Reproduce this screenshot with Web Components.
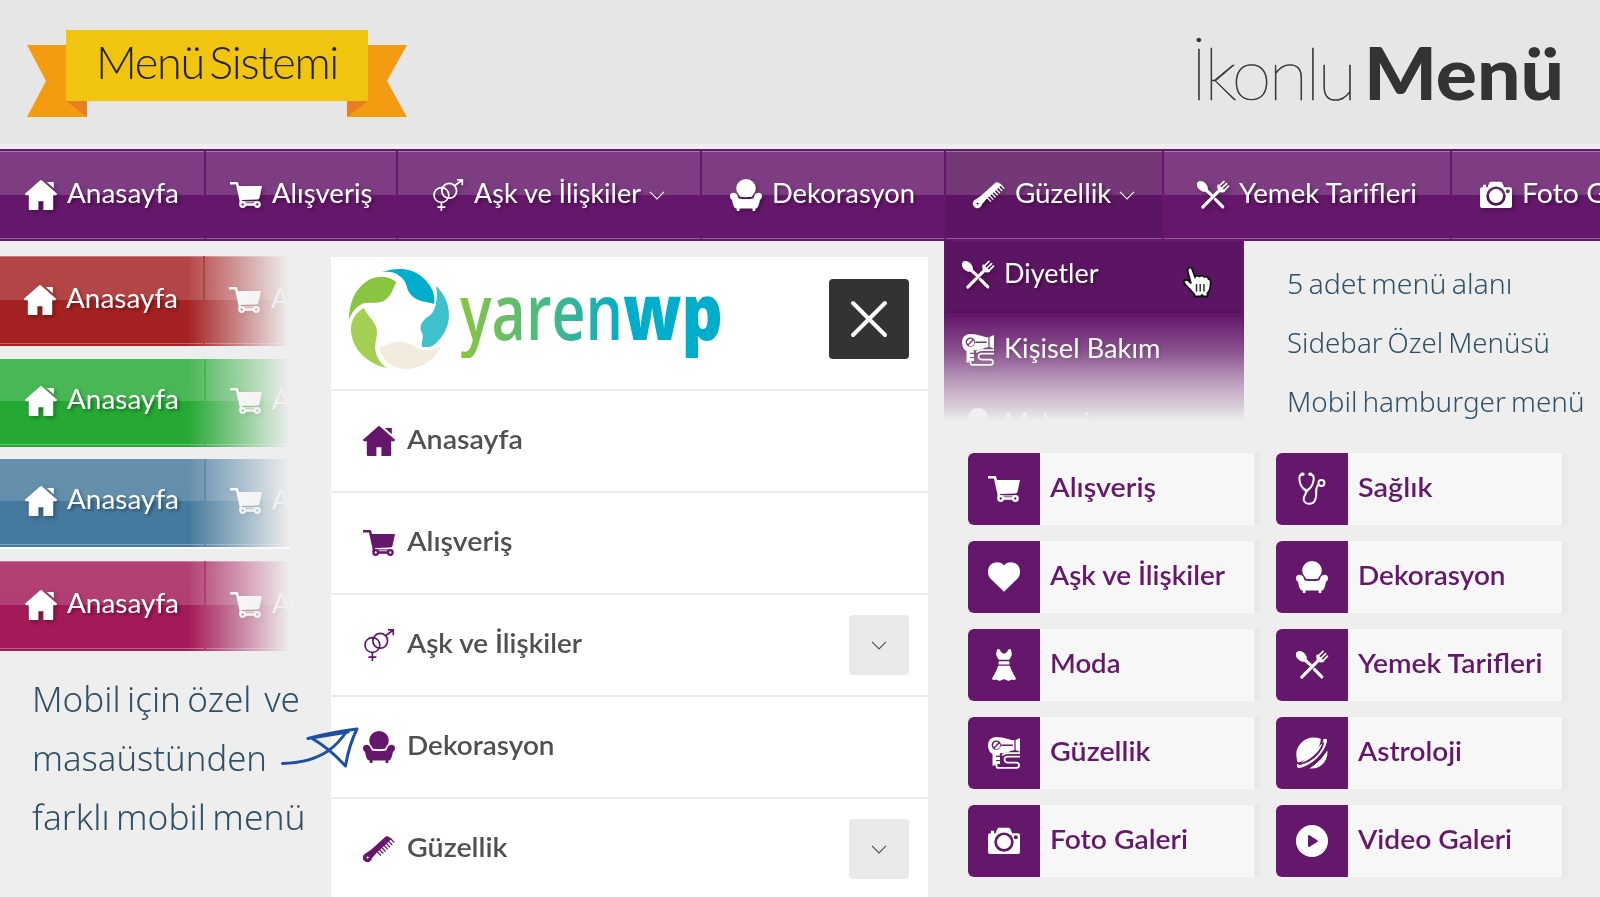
<!DOCTYPE html>
<html lang="tr">
<head>
<meta charset="utf-8">
<title>İkonlu Menü</title>
<style>
	html, body {
		margin: 0;
		padding: 0;
	}
	body {
		width: 1600px;
		height: 897px;
		overflow: hidden;
		background: #eeeeee;
		font-family: Lato, "Open Sans", sans-serif;
		--purple: #65176b;
	}
	.content {
		display: grid;
		grid-template-columns: 331px 597px 1fr;
		height: 656px;
	}
	.left {
		display: flex;
		flex-direction: column;
		padding-top: 15px;
	}
	.right {
		display: flex;
		flex-direction: column;
		padding-left: 16px;
	}
	.top {
		display: flex;
		height: 180px;
	}
	.tiles {
		display: grid;
		grid-template-columns: 292px 292px;
		gap: 16px;
		padding: 32px 0 0 24px;
	}
</style>
</head>
<body>
<page-header></page-header>
<menu-bar>
	<menu-item style="width:204px" pad="25" icon="home" w="112">Anasayfa</menu-item>
	<menu-item style="width:190px" pad="23.5" icon="cart" w="100.5">Alışveriş</menu-item>
	<menu-item style="width:302px" pad="34" icon="gender" w="167" arrow>Aşk ve İlişkiler</menu-item>
	<menu-item style="width:242px" pad="28" icon="chair" w="143">Dekorasyon</menu-item>
	<menu-item style="width:216px" pad="26.5" icon="comb" w="96.5" arrow active>Güzellik</menu-item>
	<menu-item style="width:286px" pad="32.5" icon="utensils" w="178">Yemek Tarifleri</menu-item>
	<menu-item style="width:220px" pad="28" icon="camera" w="138">Foto Galeri</menu-item>
</menu-bar>
<div class="content">
	<div class="left">
		<color-strip style="--bar:#a52122;height:90px;margin:0 0 13px -1px"></color-strip>
		<color-strip style="--bar:#25a934;height:88px;margin-bottom:12px"></color-strip>
		<color-strip style="--bar:#45799d;height:88px;margin-bottom:14px;box-shadow:0 2px 0 #fafafa"></color-strip>
		<color-strip style="--bar:#a31a58;height:90px"></color-strip>
		<side-note style="--size:35px;--line:59px;padding:17.5px 0 0 32px">
			<fit-text w="268">Mobil için özel&nbsp; ve</fit-text>
			<fit-text w="235">masaüstünden</fit-text>
			<fit-text w="273.5">farklı mobil menü</fit-text>
		</side-note>
	</div>
	<mobile-menu>
		<mobile-row icon="home" w="116">Anasayfa</mobile-row>
		<mobile-row icon="cart" w="105.5">Alışveriş</mobile-row>
		<mobile-row icon="gender" w="175" toggle>Aşk ve İlişkiler</mobile-row>
		<mobile-row icon="chair" w="147.5">Dekorasyon</mobile-row>
		<mobile-row icon="comb" w="100.5" toggle>Güzellik</mobile-row>
	</mobile-menu>
	<div class="right">
		<div class="top">
			<drop-menu></drop-menu>
			<side-note style="--size:28px;--line:59px;padding:12.5px 0 0 42.5px">
				<fit-text w="225.5">5 adet menü alanı</fit-text>
				<fit-text w="263">Sidebar Özel Menüsü</fit-text>
				<fit-text w="297.5">Mobil hamburger menü</fit-text>
			</side-note>
		</div>
		<div class="tiles">
			<menu-tile icon="cart" w="106">Alışveriş</menu-tile>
			<menu-tile icon="stethoscope" w="74.5">Sağlık</menu-tile>
			<menu-tile icon="heart" w="175">Aşk ve İlişkiler</menu-tile>
			<menu-tile icon="chair" w="147.5">Dekorasyon</menu-tile>
			<menu-tile icon="dress" w="70.5">Moda</menu-tile>
			<menu-tile icon="utensils" w="184.5">Yemek Tarifleri</menu-tile>
			<menu-tile icon="dryer" w="100.5">Güzellik</menu-tile>
			<menu-tile icon="planet" w="104">Astroloji</menu-tile>
			<menu-tile icon="camera" w="138">Foto Galeri</menu-tile>
			<menu-tile icon="play" w="154">Video Galeri</menu-tile>
		</div>
	</div>
</div>
<hand-arrow></hand-arrow>

<script>
// 32x32 glyphs, all painted with currentColor
const icons = {
	home: `<path d="M15 1.4q1-.9 2 0L31.8 14.6q.6 1.4-.8 1.6H28.2V30q0 1-1 1H18.4V22.2H13.4V31H4.8q-1 0-1-1V16.2H1q-1.4-.2-.8-1.6z"/><path d="M21.8 3H28.8V9.2z"/>`,
	cart: `<path d="M8.3 7H32L29.6 18.4Q29.2 20.3 27.4 20.5L11.6 21z"/><path d="M0 4.3H7L10.8 21.3V25" fill="none" stroke="currentColor" stroke-width="2.6" stroke-linejoin="round"/><path d="M10.5 22.9H27" stroke="currentColor" stroke-width="1"/><path d="M15 25.5H25" stroke="currentColor" stroke-width="2.6"/><circle cx="12.7" cy="25.5" r="2.3" fill="none" stroke="currentColor" stroke-width="2.3"/><circle cx="27.3" cy="25.5" r="2.3" fill="none" stroke="currentColor" stroke-width="2.3"/>`,
	gender: `<g fill="none" stroke="currentColor" stroke-width="1.7"><circle cx="9.4" cy="16" r="7.4"/><circle cx="17.2" cy="11.8" r="7.4"/><path d="M9.4 23.5V32M5.4 28.2H13.4M22.5 6.7L30 1.2M25 .9H30.3V6.2"/></g>`,
	chair: `<path d="M8.7 15.6Q6.2 13.2 6.2 9.6A9.8 9.6 0 0 1 25.8 9.6Q25.8 13.2 23.3 15.6L22 17.8Q16 18.6 10 17.8z"/><path d="M3.3 13.8c2 0 3.6 1 4.2 2.8l1.3 3q7.2 1 14.4 0l1.3-3c.6-1.8 2.2-2.8 4.2-2.8 2 0 3.3 1.5 3.3 3.4 0 2-1 3-2 3.6-.8 4-1.5 6.2-2.5 7.7-.7.9-1.3 1-2.2 1v2.5h-2.7v-2.5H9.5V32H6.8v-2.5c-1 0-1.6-.1-2.3-1-1-1.5-1.8-3.7-2.5-7.7C.9 20 0 19 0 17.2c0-1.9 1.3-3.4 3.3-3.4z"/>`,
	comb: `<path fill-rule="evenodd" d="M1.6 21L8 16.8 22.4 3.8Q24.6 2.3 26.4 4.2L28.2 6.2 13 20.4 9 25.2A4.6 4.6 0 1 1 1.6 21zM4.7 22.9l-.5 1.2-1.2.5 1.2.5.5 1.2.5-1.2 1.2-.5-1.2-.5z"/><path d="M27 5L31.3 9.6M24.7 7.4L29.2 12M22.5 9.6L27 14.2M20.3 11.8L24.8 16.4M18.1 13.9L22.6 18.5M15.9 16L20.3 20.6M13.7 18.1L18 22.6" stroke="currentColor" stroke-width="1.35"/>`,
	utensils: `<ellipse cx="5.4" cy="7.4" rx="6.3" ry="4.4" transform="rotate(43 5.4 7.4)"/><path d="M9 11L14.3 15.8M18.4 20.3L25.8 27.9" stroke="currentColor" stroke-width="3.1" stroke-linecap="round"/><path d="M5.8 28.2L22.4 11.4" stroke="currentColor" stroke-width="3.1" stroke-linecap="round"/><path d="M20.5 9.5L21.5 12.5 24.6 13.6Q27.4 13.5 28.4 12L20.9 4.9Q19.8 7 20.5 9.5z"/><path d="M21.6 7.6L27 2.4M24.2 9.8L29.6 4.6M26.8 12L31.5 7.2" stroke="currentColor" stroke-width="1.7" stroke-linecap="round"/>`,
	camera: `<path fill-rule="evenodd" d="M2 8.2H3V5.7H6V8.2H7.6L9.2 4Q9.7 2.7 11 2.7H20.6Q21.9 2.7 22.4 4L24.2 8.2H30q2 0 2 2V27q0 2-2 2H2q-2 0-2-2V10.2q0-2 2-2zM16 7.4a9.7 9.7 0 1 0 0 19.4 9.7 9.7 0 0 0 0-19.4zM27.8 10.3a2 2 0 1 0 0 4 2 2 0 0 0 0-4z"/><circle cx="16" cy="17.1" r="7"/>`,
	heart: `<path d="M16 30.8L2.4 17.4C-.8 14 -.8 7.4 2.4 4 6.4 .1 12.8 .3 16 4.4 19.2 .3 25.6 .1 29.6 4 32.8 7.4 32.8 14 29.6 17.4z"/>`,
	dress: `<path d="M9.2.3Q8 4 8.3 6.5L10.7 10.8H21.3L23.7 6.5Q24 4 22.8.3 21.5-.5 20.4.6 18.5 4.5 16 4.8 13.5 4.5 11.6.6 10.5-.5 9.2.3zM10.6 12.2H21.4V15.4H10.6zM10.2 16.8H21.8Q23.5 22 28 29.5 27.5 31.5 25 31 23.6 29.7 22.2 31.2 20.2 32.4 18.2 31 16 29.4 13.8 31 11.8 32.4 9.8 31.2 8.4 29.7 7 31 4.5 31.5 4 29.5 8.5 22 10.2 16.8z"/>`,
	dryer: `<path fill-rule="evenodd" d="M8 0Q14 0 20 2 24 3.3 26.4 3.2V13.2Q23 13.4 20 15.3 17 16.3 11.8 16.3V18.8H8V20H12V23H8V24H12V27H7.5V28.5H4.5V17Q0 14.5 0 8 .4 .7 8 0zM8.3 3.4a4.7 4.7 0 1 0 0 9.4 4.7 4.7 0 0 0 0-9.4zM13.2 7.6V9H24.8V7.6z"/><path d="M27.6 3.1L32 1V14.7L27.6 13z"/><path d="M8.3 4.8a3.3 3.3 0 0 1 2.1.7L5.8 10.2A3.3 3.3 0 0 1 8.3 4.8zM11.4 6.6A3.3 3.3 0 0 1 6.7 11.2z"/><path d="M32 19.6H19.5a3 3 0 0 0 0 6H28.4a2.6 2.6 0 0 1 0 5.3H10.5a2 2 0 0 1-2-2V27M32 16.2H20Q16 16.2 14.2 18.6" fill="none" stroke="currentColor" stroke-width="1.7"/>`,
	stethoscope: `<g fill="none" stroke="currentColor" stroke-width="2" stroke-linecap="round"><path d="M6 1.2Q3.2 1.8 3.4 6 3.8 12.5 8 16.3 10.5 18.4 12.8 16.3 17.3 12.5 17.7 6 17.9 1.8 14.8 1.2"/><path d="M10.5 18Q9.8 21 8.3 23.5 6.4 27.8 10 30 13.5 32 17.6 29.3 20.6 26 20.2 19 20 14 22.4 11.6"/><circle cx="25.4" cy="10" r="3"/></g><path d="M6 1.2h1M14.8 1.2h-1" stroke="currentColor" stroke-width="3.2" stroke-linecap="round"/><path d="M5 12.5Q7 17 10.5 20 14 17 16.2 12.5L10.5 16.5z"/>`,
	planet: `<path d="M4.9 26.3Q14 23 21 15.5 26 9.6 27.3 2.4 31.6.6 31 4.5 28.8 13.6 20.6 21.5 11.4 29.8 3 31 0 31 1.2 26.5 2 28.2 4.9 27.8 14.6 25.4 22 17.5 27.6 11 28.2 4.5"/><path d="M1 23Q-1.6 13 4.6 6.4 12.8-2.2 24.8 1.7 24.8 8.4 19.4 14.2 12.2 22 2.7 25.5 1.4 25.5 1 23z"/><path d="M31.3 13.5Q32.3 20 27.7 26 22.6 32.2 13.4 31.5 24.6 24.6 31.3 13.5z"/>`,
	play: `<path fill-rule="evenodd" d="M16 0a16 16 0 1 0 0 32 16 16 0 0 0 0-32zM12 10.8Q12.4 9.6 13.6 10.2L21.6 15.4Q22.4 16 21.6 16.7L13.6 21.8Q12.4 22.4 12 21.3z"/>`
};

const chevron = `<svg class="chevron" width="16" height="9" viewBox="0 0 16 9" fill="none" stroke="currentColor" stroke-width="1.2"><path d="M1 .8L8 7.8 15 .8"/></svg>`;

class MenuIcon extends HTMLElement {
	constructor(){
		super();
		this.attachShadow({mode: 'open'});
	}
	connectedCallback(){
		this.shadowRoot.innerHTML = `
			<style>
				:host { display: block; flex: none; width: 32px; height: 32px; }
				svg { display: block; overflow: visible; }
			</style>
			<svg width="32" height="32" viewBox="0 0 32 32" fill="currentColor">${icons[this.getAttribute('name')]}</svg>`;
	}
}

// One line of text, squeezed or stretched to the width in "w"
class FitText extends HTMLElement {
	constructor(){
		super();
		this.attachShadow({mode: 'open'}).innerHTML = `
			<style>
				:host { display: block; flex: none; white-space: nowrap; }
				span {
					display: inline-block;
					transform-origin: 0 50%;
					background-image: inherit;
					-webkit-background-clip: text;
					background-clip: text;
				}
			</style>
			<span><slot></slot></span>`;
	}
	connectedCallback(){
		const span = this.shadowRoot.querySelector('span');
		const w = +this.getAttribute('w');
		const natural = span.getBoundingClientRect().width;
		this.style.width = `${w}px`;
		span.style.transform = `scaleX(${w / natural})`;
	}
}

class PageHeader extends HTMLElement {
	constructor(){
		super();
		this.attachShadow({mode: 'open'}).innerHTML = `
			<style>
				:host {
					display: flex;
					justify-content: space-between;
					box-sizing: border-box;
					height: 144px;
					margin-bottom: 5px;
					padding: 30px 36px 0 27px;
					background: #e6e6e6;
				}
				.ribbon { display: grid; width: 380px; height: 87px; }
				.ribbon > * { grid-area: 1 / 1; }
				.ribbon fit-text {
					margin: 2px 0 0 69px;
					color: #222;
					font: 300 46px/60px Lato, sans-serif;
					letter-spacing: -.03em;
					word-spacing: -.12em;
				}
				h1 {
					display: flex;
					gap: 10px;
					margin: -6px 0 0;
					color: #333;
					font: 100 72px/96px Lato, sans-serif;
				}
				.thin { letter-spacing: -.04em; -webkit-text-stroke: .6px #333; }
				.bold { font-weight: 900; }
			</style>
			<div class="ribbon">
				<svg width="380" height="87">
					<path d="M0 15H60V87H0L19 51zM380 15H320V87H380L360 51z" fill="#f39c12"/>
					<path d="M39 71H60V87zM341 71H320V87z" fill="#e67e22"/>
					<path d="M39 0H341V71H39z" fill="#f1c40f"/>
				</svg>
				<fit-text w="242">Menü Sistemi</fit-text>
			</div>
			<h1><fit-text class="thin" w="164">İkonlu</fit-text><fit-text class="bold" w="200">Menü</fit-text></h1>`;
	}
}

class MenuBar extends HTMLElement {
	constructor(){
		super();
		this.attachShadow({mode: 'open'}).innerHTML = `
			<style>
				:host {
					display: flex;
					gap: 2px;
					box-sizing: border-box;
					flex: none;
					height: 92px;
					padding: 2px 0;
					overflow: hidden;
					background: var(--bar, var(--purple));
				}
			</style>
			<slot></slot>`;
	}
}

class MenuItem extends HTMLElement {
	constructor(){
		super();
		this.attachShadow({mode: 'open'});
	}
	connectedCallback(){
		const arrow = this.hasAttribute('arrow') ? chevron : '';
		this.shadowRoot.innerHTML = `
			<style>
				:host {
					display: flex;
					flex: none;
					align-items: center;
					box-sizing: border-box;
					height: 88px;
					padding-left: ${this.getAttribute('pad')}px;
					color: #fff;
					font-size: 27px;
					line-height: 34px;
					background: linear-gradient(rgba(255,255,255,.17), rgba(255,255,255,.16) 44px, transparent 44px);
					box-shadow: inset 0 1px rgba(255,255,255,.3), inset 0 -1px rgba(255,255,255,.3);
				}
				:host([active]) {
					background: linear-gradient(rgba(255,255,255,.15) 44px, transparent 44px), #5c1562;
				}
				menu-icon { margin-right: 10px; filter: drop-shadow(2px 2px 2px rgba(0,0,0,.3)); }
				fit-text { padding-bottom: 4px; text-shadow: 2px 2px 3px rgba(0,0,0,.35); }
				.chevron { margin-left: 8px; }
			</style>
			<menu-icon name="${this.getAttribute('icon')}"></menu-icon>
			<fit-text w="${this.getAttribute('w')}"><slot></slot></fit-text>${arrow}`;
	}
}

// Short coloured copy of the bar, fading out to the right
class ColorStrip extends HTMLElement {
	constructor(){
		super();
		this.attachShadow({mode: 'open'}).innerHTML = `
			<style>
				:host {
					display: flex;
					position: relative;
					align-items: flex-end;
					width: 290px;
					overflow: hidden;
				}
				menu-bar { width: 290px; }
				:host::after {
					content: '';
					position: absolute;
					inset: 0;
					background: linear-gradient(90deg, rgba(238,238,238,0) 188px, rgba(238,238,238,.5) 240px, #eee 290px);
				}
			</style>
			<menu-bar>
				<menu-item style="width:204px" pad="25" icon="home" w="112">Anasayfa</menu-item>
				<menu-item style="width:190px" pad="23.5" icon="cart" w="100.5">Alışveriş</menu-item>
			</menu-bar>`;
	}
}

class SideNote extends HTMLElement {
	constructor(){
		super();
		this.attachShadow({mode: 'open'}).innerHTML = `
			<style>
				:host {
					display: block;
					color: #2f5165;
					font-family: "Noto Sans", "Open Sans", sans-serif;
					font-weight: 350;
					font-size: var(--size);
					line-height: var(--line);
					word-spacing: -.08em;
				}
			</style>
			<slot></slot>`;
	}
}

class MobileMenu extends HTMLElement {
	constructor(){
		super();
		this.attachShadow({mode: 'open'}).innerHTML = `
			<style>
				:host {
					display: block;
					margin-top: 16px;
					overflow: hidden;
					background: #fff;
				}
				header {
					display: flex;
					align-items: flex-start;
					box-sizing: border-box;
					height: 132px;
					padding: 12px 19px 0 18px;
				}
				.brand {
					display: flex;
					margin: -7px auto 0 11px;
					color: transparent;
					font: 600 78px/96px "Open Sans", sans-serif;
				}
				.brand fit-text { -webkit-background-clip: text; background-clip: text; }
				.yaren { background-image: linear-gradient(90deg, #88c540, #4dba80 50%, #1cb0b4 85%, #00adca); }
				.wp { font-weight: 800; background-image: linear-gradient(#00adca, #00adca); }
				button {
					display: grid;
					place-items: center;
					width: 80px;
					height: 80px;
					margin: 10px 0 0;
					padding: 0;
					border: 0;
					border-radius: 4px;
					background: #333;
				}
			</style>
			<header>
				<svg width="100" height="100">
					<path fill="#00adca" d="M33 3C48-2 63-1 73 8 82 15 87 26 85 35 78 32 67 34 60 23 57 18 58 13 52 8 47 3 41 2 33 3z"/>
					<path fill="#88c540" d="M0 51C0 35 5 24 13 16 23 6 37 5 47.5 13 44 19 43 26 36 31 29 36 20 32 13 35 7 38 2 44 0 51z"/>
					<path fill="#3dc1ca" d="M87 17C95 24 100 35 100 46 100 58 94 68 86 75 82 79 77 78 73 78 72 70 76 68 72 62 70 56 74 51 80 47 88 42 89 26 87 17z"/>
					<path fill="#a4cf53" d="M15 39C19 49 29 53 28 65 27 73 24 80 29 89 31 93 34 97 38 99 22 96 2 82 2 60 2 51 7 43 15 39z"/>
					<path fill="#f4ebdf" d="M30 79C38 77 42 72 53 73 63 73 67 82 79 81 84 81 88 79 92 77 86 91 72 100 56 100 42 99 34 91 30 79z"/>
				</svg>
				<div class="brand"><fit-text class="yaren" w="163">yaren</fit-text><fit-text class="wp" w="100">wp</fit-text></div>
				<button><svg width="40" height="40" stroke="#fff" stroke-width="4" stroke-linecap="round"><path d="M4 4L36 36M36 4L4 36"/></svg></button>
			</header>
			<slot></slot>`;
	}
}

class MobileRow extends HTMLElement {
	constructor(){
		super();
		this.attachShadow({mode: 'open'});
	}
	connectedCallback(){
		const toggle = this.hasAttribute('toggle') ? `<span class="toggle">${chevron}</span>` : '';
		this.shadowRoot.innerHTML = `
			<style>
				:host {
					display: flex;
					align-items: center;
					height: 100px;
					padding: 0 19px 0 32px;
					border-top: 2px solid #ebebeb;
					color: #505050;
					font-weight: 600;
					font-size: 27px;
					line-height: 34px;
				}
				menu-icon { margin: -1px 12px 0 0; color: var(--purple); }
				fit-text { padding-bottom: 4px; }
				.toggle {
					display: grid;
					place-items: center;
					width: 60px;
					height: 60px;
					margin-left: auto;
					border-radius: 4px;
					background: #eaeaea;
				}
			</style>
			<menu-icon name="${this.getAttribute('icon')}"></menu-icon>
			<fit-text w="${this.getAttribute('w')}"><slot></slot></fit-text>${toggle}`;
	}
}

class DropMenu extends HTMLElement {
	constructor(){
		super();
		this.attachShadow({mode: 'open'}).innerHTML = `
			<style>
				:host {
					display: block;
					position: relative;
					width: 300px;
					height: 180px;
					overflow: hidden;
					background: var(--purple);
					color: #fff;
					font-size: 27px;
					line-height: 34px;
				}
				.row {
					display: flex;
					align-items: center;
					box-sizing: border-box;
					height: 73px;
					padding: 0 0 0 18px;
				}
				.row.hover {
					height: 72px;
					margin: 0 2px;
					padding: 0 0 2px 16px;
					border-bottom: 2px solid #551259;
					background: #5c1562;
				}
				.row.last { height: 76px; }
				menu-icon { margin-right: 10px; filter: drop-shadow(2px 2px 2px rgba(0,0,0,.3)); }
				fit-text { padding-bottom: 4px; text-shadow: 2px 2px 3px rgba(0,0,0,.35); }
				.fade {
					position: absolute;
					inset: 74px 0 0;
					background: linear-gradient(rgba(238,238,238,0), rgba(238,238,238,.27) 36px, rgba(238,238,238,.62) 66px, rgba(238,238,238,.85) 92px, #eee);
				}
				.hand { position: absolute; left: 238px; top: 25px; }
			</style>
			<div class="row hover"><menu-icon name="utensils"></menu-icon><fit-text w="94.5">Diyetler</fit-text></div>
			<div class="row"><menu-icon name="dryer"></menu-icon><fit-text w="156.5">Kişisel Bakım</fit-text></div>
			<div class="row last"><menu-icon name="chair"></menu-icon><fit-text w="86">Makyaj</fit-text></div>
			<div class="fade"></div>
			<svg class="hand" width="31" height="33" viewBox="0 0 31 33">
				<path d="M6.5 2Q9.5.5 10.5 4L13 11Q14.5 8.5 17.5 10.5 20 8.5 22.2 11 25.5 9.5 26.5 13 29.5 13.5 28.5 19 28 25 25.5 27V30.5H21.5L20 29 18.5 30.5H12.5V28.5L8 23.5 2.5 17.5Q1 14.5 3.5 14 6 13.5 9 17.5L6 7Q5 3.5 6.5 2z" fill="#fff" stroke="#111" stroke-width="1.8"/>
				<path d="M14.5 18V25.5M18.2 18V25.5M22 18V25.5" stroke="#222" stroke-width="1.4"/>
			</svg>`;
	}
}

class MenuTile extends HTMLElement {
	constructor(){
		super();
		this.attachShadow({mode: 'open'});
	}
	connectedCallback(){
		this.shadowRoot.innerHTML = `
			<style>
				:host {
					display: flex;
					align-items: center;
					box-sizing: border-box;
					height: 72px;
					border-right: 6px solid #e9e9e9;
					border-radius: 6px 0 0 6px;
					background: #f7f7f7;
					color: var(--purple);
					font-weight: 600;
					font-size: 27px;
					line-height: 34px;
				}
				.box {
					display: grid;
					place-items: center;
					width: 72px;
					height: 72px;
					margin-right: 10px;
					border-radius: 6px 0 0 6px;
					background: var(--purple);
					color: #fff;
				}
				fit-text { padding-bottom: 4.5px; }
			</style>
			<div class="box"><menu-icon name="${this.getAttribute('icon')}"></menu-icon></div>
			<fit-text w="${this.getAttribute('w')}"><slot></slot></fit-text>`;
	}
}

class HandArrow extends HTMLElement {
	constructor(){
		super();
		this.attachShadow({mode: 'open'}).innerHTML = `
			<style>
				:host { display: block; position: absolute; left: 280px; top: 726px; }
				svg { display: block; }
			</style>
			<svg width="80" height="44" fill="none" stroke="#1c50a6" stroke-width="3" stroke-linecap="round" stroke-linejoin="round">
				<path d="M2.5 37.5Q30 37 48 25 58 18 67 5"/>
				<path d="M28 12.5Q52 6 77 3 69 19 65.5 40 50 23 33 13M28 12.5L68 6"/>
			</svg>`;
	}
}

customElements.define('menu-icon', MenuIcon);
customElements.define('page-header', PageHeader);
customElements.define('menu-bar', MenuBar);
customElements.define('menu-item', MenuItem);
customElements.define('color-strip', ColorStrip);
customElements.define('side-note', SideNote);
customElements.define('mobile-menu', MobileMenu);
customElements.define('mobile-row', MobileRow);
customElements.define('drop-menu', DropMenu);
customElements.define('menu-tile', MenuTile);
customElements.define('hand-arrow', HandArrow);
// last, so that every label already has its final font when it is measured
customElements.define('fit-text', FitText);
</script>
</body>
</html>
